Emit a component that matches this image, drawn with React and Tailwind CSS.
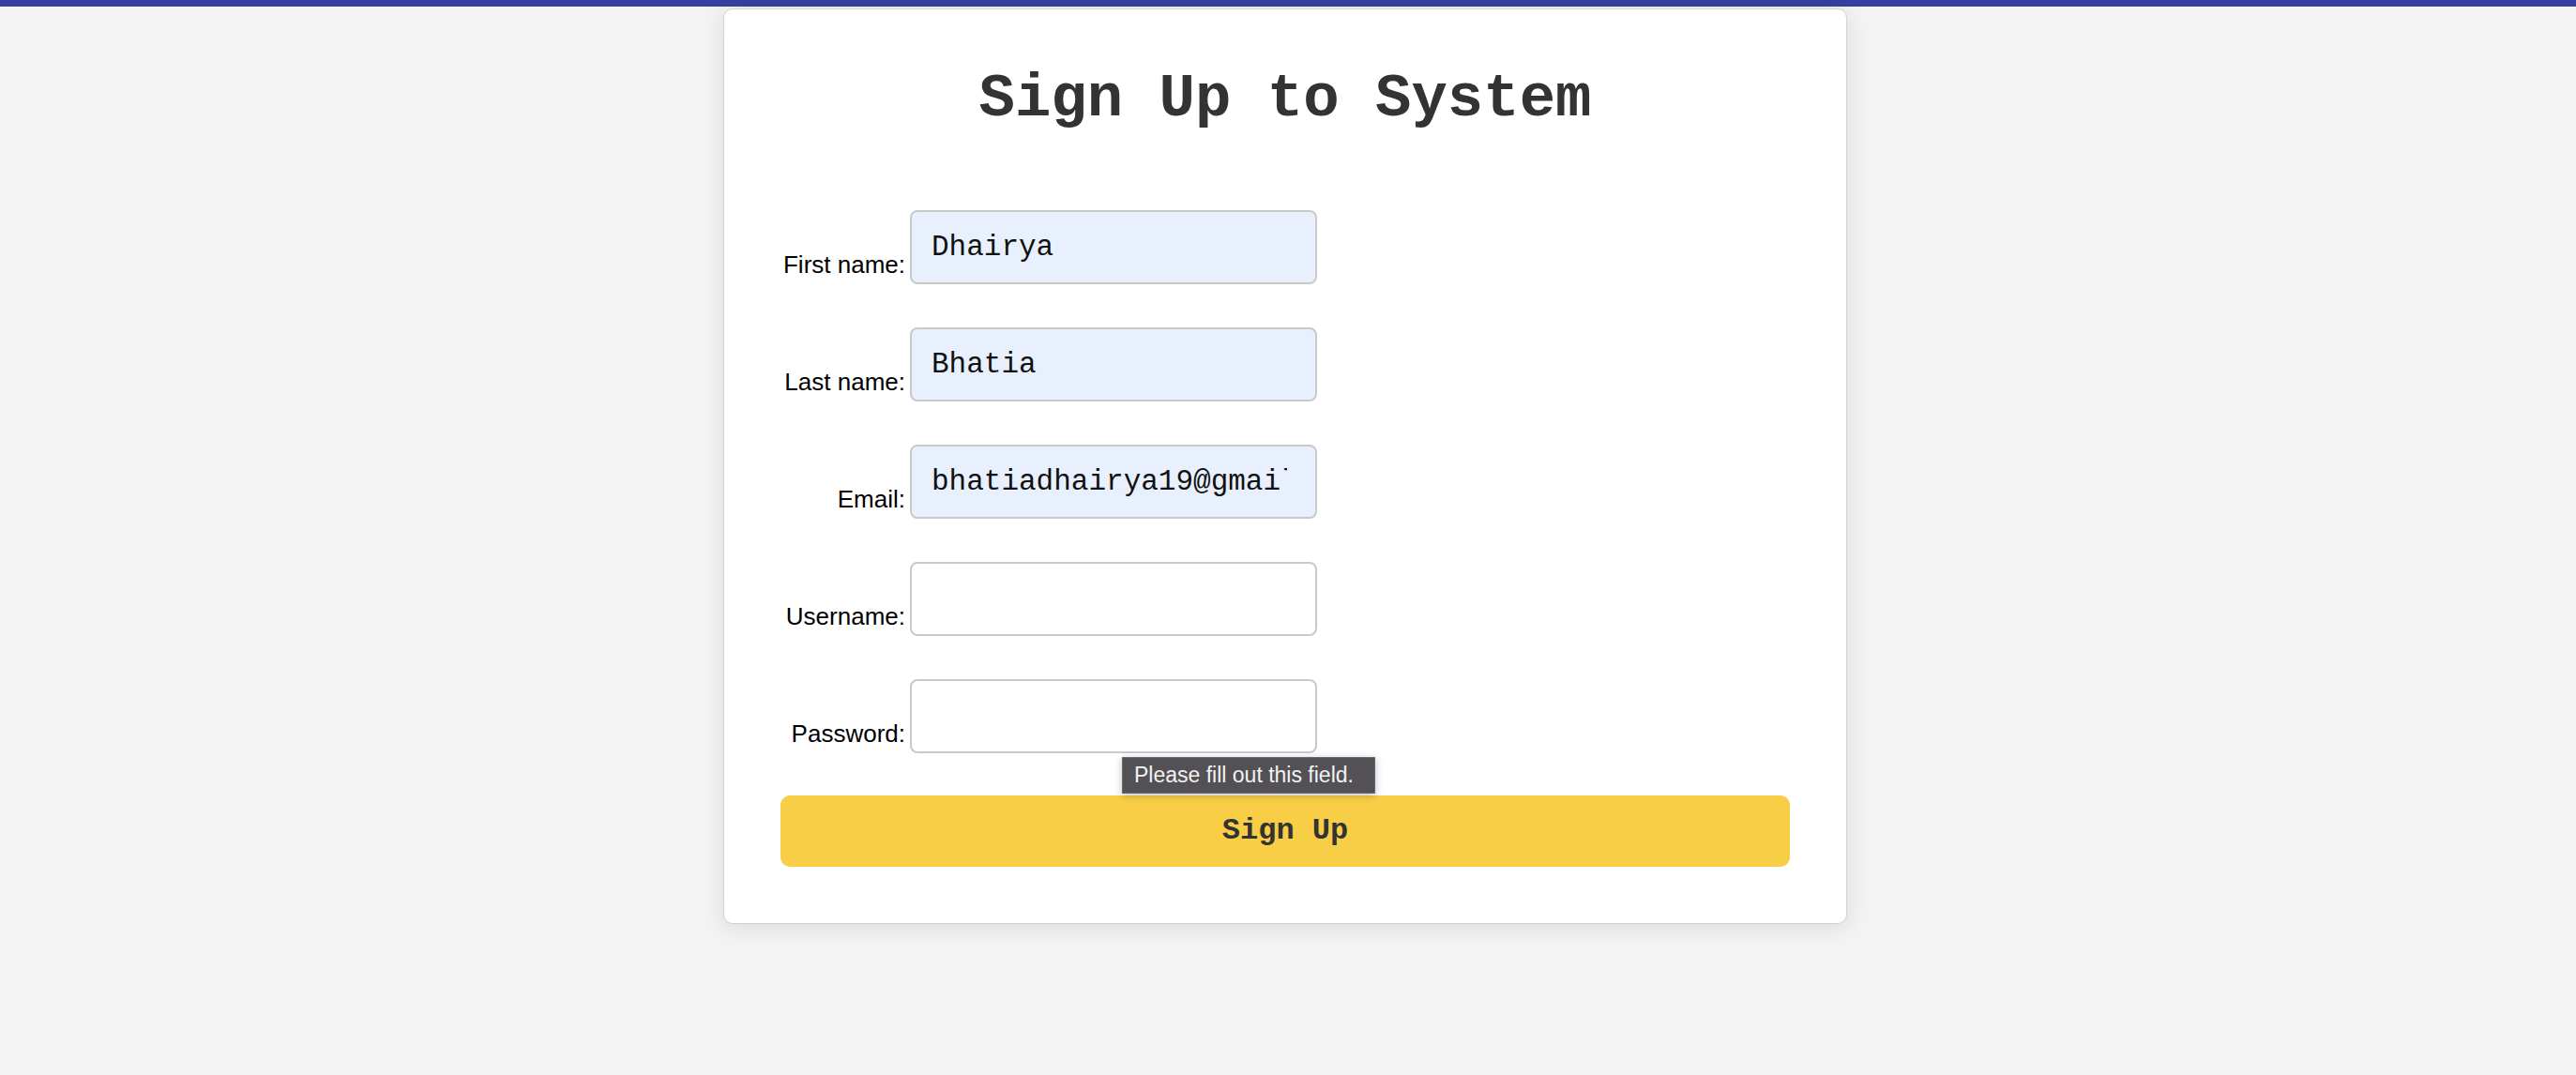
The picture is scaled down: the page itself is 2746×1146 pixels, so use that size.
import React from 'react';

const fields = [
  { label: 'First name:', value: 'Dhairya', filled: true },
  { label: 'Last name:', value: 'Bhatia', filled: true },
  { label: 'Email:', value: 'bhatiadhairya19@gmail.com', filled: true },
  { label: 'Username:', value: '', filled: false },
  { label: 'Password:', value: '', filled: false, type: 'password', tip: true },
];

const Field = ({ label, value, filled, type, tip }) => (
  <div className="relative flex items-end">
    <label className="w-[133px] shrink-0 pb-[6px] text-right text-[26px] leading-[30px] text-black font-['Liberation_Sans',Arial,sans-serif]">
      {label}
    </label>
    <input
      type={type || 'text'}
      readOnly
      value={value}
      className={
        'ml-[5px] h-[79px] w-[434px] rounded-[8px] border-2 border-[#c9c9c9] pl-[21px] pr-[30px] text-[31px] text-[#111] outline-none font-["Liberation_Mono","Courier_New",monospace] ' +
        (filled ? 'bg-[#e8f0fe]' : 'bg-white')
      }
    />
    {tip && (
      <div className="absolute left-[364px] top-[83px] z-10 h-[39px] w-[270px] border border-[#6a686d] bg-[#535156] px-[12px] text-[23px] leading-[37px] text-[#f2f2f2] shadow-[0_2px_8px_rgba(0,0,0,0.25)] font-['Liberation_Sans',Arial,sans-serif] whitespace-nowrap">
        Please fill out this field.
      </div>
    )}
  </div>
);

const App = () => {
  return (
    <div className="min-h-screen w-full bg-[#f3f3f3]">
      <div className="h-[7px] w-full bg-[#373fa0]" />
      <div className="flex justify-center pr-[6px]">
        <div className="mt-[2px] w-[1198px] rounded-[10px] border border-[#d2d2d2] bg-white p-[60px] shadow-[0_4px_24px_rgba(0,0,0,0.10)]">
          <h1 className="text-center text-[64px] font-bold leading-[72px] text-[#333] font-['Liberation_Mono','Courier_New',monospace]">
            Sign Up to System
          </h1>

          <form className="mt-[82px] flex flex-col gap-[46px]" onSubmit={(e) => e.preventDefault()}>
            {fields.map((f) => (
              <Field key={f.label} {...f} />
            ))}
          </form>

          <button className="mt-[45px] flex h-[76px] w-full items-center justify-center rounded-[10px] bg-[#f7ce46] text-[32px] font-bold text-[#333] font-['Liberation_Mono','Courier_New',monospace]">
            Sign Up
          </button>
        </div>
      </div>
    </div>
  );
};

export default App;
